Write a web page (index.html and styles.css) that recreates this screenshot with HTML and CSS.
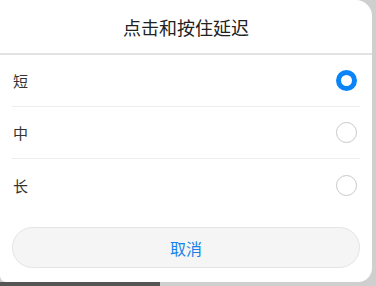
FILE: index.html
```html
<!DOCTYPE html>
<html lang="zh-CN">
<head>
<meta charset="utf-8">
<link rel="stylesheet" href="styles.css">
</head>
<body>
<div class="dialog">
  <div class="title">点击和按住延迟</div>
  <div class="options">
    <div class="row"><span class="label">短</span><span class="radio checked"></span></div>
    <div class="row"><span class="label">中</span><span class="radio"></span></div>
    <div class="row last"><span class="label">长</span><span class="radio"></span></div>
  </div>
  <div class="actions">
    <div class="btn">取消</div>
  </div>
</div>
<div class="under"></div>
</body>
</html>
```
FILE: styles.css
```css
html, body {
  margin: 0;
  padding: 0;
}
body {
  width: 376px;
  height: 286px;
  overflow: hidden;
  background: #cfcfcf;
  font-family: "Noto Sans CJK SC", "Noto Sans", sans-serif;
}
.dialog {
  width: 372px;
  height: 282px;
  background: #fff;
  border-radius: 0 16px 14px 6px;
  display: flex;
  flex-direction: column;
}
.title {
  height: 53px;
  display: flex;
  align-items: center;
  justify-content: center;
  font-size: 18px;
  color: #222;
  border-bottom: 2px solid #e2e2e2;
  padding-top: 1px;
  box-sizing: border-box;
  height: 55px;
}
.options {
  padding: 0 12px;
  display: flex;
  flex-direction: column;
}
.row {
  height: 51px;
  display: flex;
  align-items: center;
  justify-content: space-between;
  border-bottom: 1px solid #ededed;
}
.row.last {
  height: 53px;
  border-bottom: none;
}
.label {
  font-size: 15px;
  color: #333;
  padding-left: 1px;
}
.radio {
  width: 21px;
  height: 21px;
  box-sizing: border-box;
  border: 1px solid #c8c8c8;
  border-radius: 50%;
  margin-right: 3px;
}
.radio.checked {
  border: 5px solid #0a84f6;
  width: 21px;
  height: 21px;
}
.actions {
  padding: 15px 12px 0;
}
.btn {
  height: 41px;
  box-sizing: border-box;
  border: 1px solid #e4e4e4;
  background: #f5f5f5;
  border-radius: 21px;
  display: flex;
  align-items: center;
  justify-content: center;
  font-size: 16px;
  color: #1583e8;
}
.under {
  height: 4px;
  width: 160px;
  background: #555;
}
```
